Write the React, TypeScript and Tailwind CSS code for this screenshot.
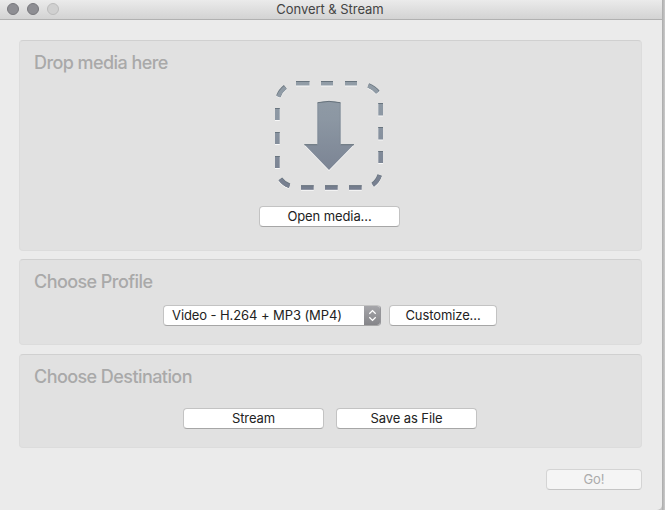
import type { ReactNode } from "react";

function Panel({ title, className, children }: { title: string; className: string; children: ReactNode }) {
  return (
    <section className={`w-[623px] rounded-[4px] border border-[#dcdcdc] border-t-[#d0d0d0] bg-[#e1e1e1] pt-[11px] ${className}`}>
      <h2 className="ml-[14px] text-[18px] leading-[22px] font-medium tracking-[-0.57px] text-[#a9a9a9]">{title}</h2>
      {children}
    </section>
  );
}

function Button({ className, children }: { className: string; children: ReactNode }) {
  return (
    <button className={`flex h-[21px] items-center justify-center rounded-[4px] border border-[#c3c3c3] border-b-[#a6a6a6] bg-white text-[13px] leading-[19px] tracking-[-0.1px] text-[#222] ${className}`}>
      {children}
    </button>
  );
}

const dashes = [
  [22, 1, 13.5, 4.5], [47, 1, 12, 4.5], [71, 1, 12, 4.5],
  [1, 28, 4.7, 12], [1, 52, 4.7, 12], [1, 76, 4.7, 12],
  [104.3, 23, 4.7, 12.5], [104.3, 47, 4.7, 12.5], [104.3, 71, 4.7, 12],
  [27, 105.3, 12.7, 4.5], [51, 105.3, 12.7, 4.5], [75, 105.3, 12.7, 4.5],
];

const corners = [
  "M4.3 16.3Q6.5 10.6 11.3 6.9",
  "M94.3 5.3Q100.3 7.6 103.7 12.2",
  "M6.3 98.8Q10 103.8 15.5 105.7",
  "M98.8 104.6Q103.8 101 105.7 95",
];

const arrow = "M43.5 22.7Q55 20 66.5 22.7V64.5H80L55 90L30.3 64.5H43.5Z";

function DropIcon() {
  return (
    <svg className="mt-[6px] ml-[254px] block" width="110" height="112" viewBox="0 0 110 112" fill="none">
      <defs>
        <linearGradient id="steel" gradientUnits="userSpaceOnUse" x1="0" y1="0" x2="0" y2="110">
          <stop offset="0" stopColor="#929da7" />
          <stop offset="0.35" stopColor="#8c97a3" />
          <stop offset="1" stopColor="#757d8e" />
        </linearGradient>
      </defs>
      <g transform="translate(0 1)" fill="#f8f8f8">
        {dashes.map(([x, y, w, h], i) => <rect key={i} x={x} y={y} width={w} height={h} />)}
        <path d={arrow} />
      </g>
      <g fill="url(#steel)">
        {dashes.map(([x, y, w, h], i) => <rect key={i} x={x} y={y} width={w} height={h} />)}
        <path d={arrow} />
      </g>
      {dashes.map(([x, y, w], i) => <rect key={i} x={x} y={y} width={w} height="1" fill="#68747e" />)}
      <path d="M43.5 22.7Q55 20 66.5 22.7M30.3 64.7H43.5M66.5 64.7H80" stroke="#66727c" />
      <path d="M43.8 23V64.5M66.2 23V64.5" stroke="#798590" strokeWidth="0.6" />
      {corners.map((d) => (
        <g key={d} strokeWidth="4.6">
          <path d={d} transform="translate(0 1)" stroke="#f8f8f8" />
          <path d={d} stroke="#68747e" />
          <path d={d} transform="translate(0 .5)" stroke="url(#steel)" strokeWidth="3.8" />
        </g>
      ))}
    </svg>
  );
}

export default function App() {
  return (
    <div className="flex h-[510px] w-[665px] overflow-hidden bg-[#c4c4c4] font-['Inter',sans-serif]">
      <main className="h-[510px] w-[662px] shrink-0 rounded-br-[5px] bg-[#ebebeb]">
        <header className="grid h-5 grid-cols-[1fr_auto_1fr] border-b border-[#b1b1b1] bg-linear-to-b from-[#ebebeb] to-[#d3d3d3]">
          <div className="flex gap-2 pt-[3px] pl-[7px]">
            <i className="size-3 rounded-full border border-[#77777c] bg-[#8e8e93]" />
            <i className="size-3 rounded-full border border-[#77777c] bg-[#8e8e93]" />
            <i className="size-3 rounded-full border border-[#bcbcbc] bg-[#d0d0d0]" />
          </div>
          <h1 className="-ml-[2px] text-[13px] leading-[19px] tracking-[-0.05px] text-[#444]">Convert &amp; Stream</h1>
        </header>
        <div className="flex flex-col pt-5 pl-[19px]">
          <Panel title="Drop media here" className="h-[211px]">
            <DropIcon />
            <Button className="mt-[14px] ml-[239px] w-[141px]">Open media...</Button>
          </Panel>
          <Panel title="Choose Profile" className="mt-2 h-[86px]">
            <div className="mt-[12px] ml-[143px] flex gap-2">
              <button className="flex h-[21px] w-[218px] overflow-hidden rounded-[4px] border border-[#c3c3c3] border-r-[#949498] border-b-[#a6a6a6] bg-white text-[13px] leading-[19px] tracking-[-0.09px] text-[#222]">
                <span className="flex-1 pl-2 text-left">Video - H.264 + MP3 (MP4)</span>
                <span className="flex h-full w-4 items-center justify-center bg-linear-to-b from-[#a6a6aa] to-[#858589]">
                  <svg width="9" height="13" viewBox="0 0 9 13" fill="none" stroke="white" strokeWidth="1.3">
                    <path d="M1.3 4.8L4.5 1.6L7.7 4.8M1.3 8.2L4.5 11.4L7.7 8.2" />
                  </svg>
                </span>
              </button>
              <Button className="w-[108px]">Customize...</Button>
            </div>
          </Panel>
          <Panel title="Choose Destination" className="mt-[9px] h-[94px]">
            <div className="mt-[20px] ml-[163px] flex gap-3">
              <Button className="w-[141px]">Stream</Button>
              <Button className="w-[141px]">Save as File</Button>
            </div>
          </Panel>
          <button className="mt-[21px] ml-[527px] h-[21px] w-24 rounded-[4px] border border-[#d4d4d4] border-b-[#c5c5c5] bg-[#f5f5f5] text-[13px] leading-[19px] text-[#ababab]">Go!</button>
        </div>
      </main>
      <aside className="h-full w-[3px] bg-linear-to-r from-[#aaa] to-[#cbcbcb]" />
    </div>
  );
}
